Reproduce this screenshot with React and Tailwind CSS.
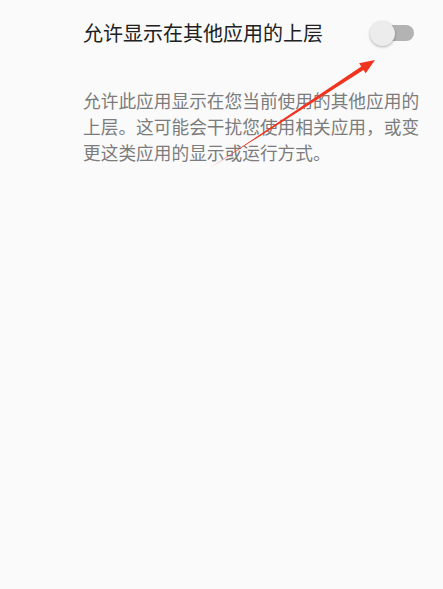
const Toggle = () => {
  return (
    <div className="relative w-[44px] h-[28px] shrink-0">
      {/* track */}
      <div className="absolute right-0 top-[6px] w-[36px] h-[16px] rounded-full bg-[#b3b3b3]" />
      {/* thumb */}
      <div className="absolute left-0 top-[2px] w-[25px] h-[25px] rounded-full bg-[#ececec] shadow-[0_1px_3px_rgba(0,0,0,0.3)]" />
    </div>
  );
};

const App = () => {
  return (
    <div
      className="relative w-[443px] h-[589px] bg-[#fafafa] overflow-hidden"
      style={{ fontFamily: '"Noto Sans CJK SC", "Noto Sans", sans-serif' }}
    >
      {/* Setting row */}
      <div className="flex items-center justify-between h-[66px] pl-[83px] pr-[29px]">
        <span className="text-[20px] text-[#212121] leading-none">允许显示在其他应用的上层</span>
        <Toggle />
      </div>

      {/* Description */}
      <p className="mt-[21px] ml-[83px] w-[345px] text-[17.7px] leading-[26px] text-[#7c7c7c]">
        允许此应用显示在您当前使用的其他应用的上层。这可能会干扰您使用相关应用，或变更这类应用的显示或运行方式。
      </p>

      {/* Annotation arrow */}
      <svg
        className="absolute inset-0 pointer-events-none"
        width="443"
        height="589"
        viewBox="0 0 443 589"
      >
        <polygon
          points="210,168 361.3,66.5 359.1,63.2 375,60 365.7,73.2 363.5,69.9"
          fill="#f0341f"
        />
      </svg>
    </div>
  );
};

export default App;
